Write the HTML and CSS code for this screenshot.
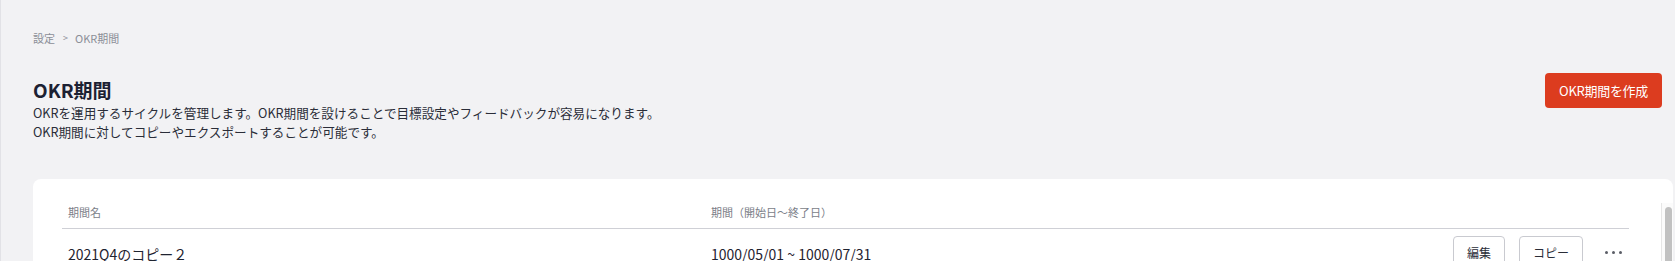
FILE: index.html
```html
<!DOCTYPE html>
<html lang="ja">
<head>
<meta charset="utf-8">
<title>OKR期間</title>
<link rel="stylesheet" href="styles.css">
</head>
<body>
<div class="page">
  <nav class="breadcrumb"><span>設定</span><span class="sep">&gt;</span><span>OKR期間</span></nav>
  <header class="head">
    <div class="head-text">
      <h1 class="title">OKR期間</h1>
      <p class="desc">OKRを運用するサイクルを管理します。OKR期間を設けることで目標設定やフィードバックが容易になります。<br>OKR期間に対してコピーやエクスポートすることが可能です。</p>
    </div>
    <button class="primary">OKR期間を作成</button>
  </header>
  <section class="card">
    <div class="table">
      <div class="row header">
        <div class="cell">期間名</div>
        <div class="cell">期間（開始日〜終了日）</div>
        <div class="cell"></div>
      </div>
      <div class="row">
        <div class="cell name">2021Q4のコピー２</div>
        <div class="cell date">1000/05/01 ~ 1000/07/31</div>
        <div class="cell actions">
          <button class="outline">編集</button>
          <button class="outline">コピー</button>
          <button class="more" aria-label="more"><span></span><span></span><span></span></button>
        </div>
      </div>
      <div class="row">
        <div class="cell name">2021Q4のコピー</div>
        <div class="cell date">1000/05/01 ~ 1000/07/31</div>
        <div class="cell actions">
          <button class="outline">編集</button>
          <button class="outline">コピー</button>
          <button class="more" aria-label="more"><span></span><span></span><span></span></button>
        </div>
      </div>
    </div>
    <div class="scrollbar"><div class="thumb"></div></div>
  </section>
</div>
</body>
</html>
```

FILE: styles.css
```css
html, body {
  margin: 0;
  padding: 0;
  height: 100%;
  overflow: hidden;
}
body {
  background: #f2f2f4;
  font-family: "Noto Sans CJK JP", "Noto Sans", sans-serif;
  color: #2a2d38;
  border-left: 1px solid #e2e2e6;
  box-sizing: border-box;
}
.page {
  padding: 30px 2px 0 32px;
}
.breadcrumb {
  font-size: 11px;
  line-height: 16px;
  color: #8b8e97;
  display: flex;
}
.breadcrumb .sep {
  margin: 0 7px 0 8px;
  font-size: 9px;
}
.head {
  display: flex;
  justify-content: space-between;
  align-items: flex-start;
  margin-top: 31px;
  padding-right: 11px;
}
.title {
  margin: 0;
  font-size: 19px;
  line-height: 26px;
  font-weight: 700;
  color: #1c2133;
}
.desc {
  margin: 0;
  font-size: 12.6px;
  line-height: 19px;
  color: #2a2d38;
}
.primary {
  margin-top: -4px;
  height: 35px;
  padding: 0 14px;
  border: none;
  border-radius: 4px;
  background: #dc3c1f;
  color: #ffffff;
  font-family: inherit;
  font-size: 13px;
  letter-spacing: -0.3px;
}
.card {
  margin-top: 38px;
  background: #ffffff;
  border-radius: 8px;
  padding-top: 24px;
  height: 300px;
  box-sizing: border-box;
  display: flex;
  align-items: stretch;
}
.table {
  flex: 1;
  margin: 0 32px 0 29px;
}
.scrollbar {
  width: 12px;
  background: #fbfbfb;
  border-left: 1px solid #e6e6e6;
  padding: 4px 1px 0 3px;
  box-sizing: border-box;
}
.thumb {
  height: 120px;
  background: #c1c1c1;
  border-radius: 4px;
}
.row {
  display: grid;
  grid-template-columns: 643px 1fr auto;
  align-items: center;
  border-bottom: 1px solid #e6e6ea;
}
.row.header {
  border-bottom: 1px solid #cfd0d6;
  align-items: start;
}
.cell {
  padding: 0 6px;
}
.header .cell {
  font-size: 11px;
  line-height: 16px;
  color: #7b7e88;
  padding-top: 1px;
  padding-bottom: 8px;
}
.name, .date {
  font-size: 14px;
  line-height: 22px;
  color: #1f2330;
  padding-top: 2px;
}
.actions {
  display: flex;
  gap: 14px;
  padding: 7px 0 8px;
  align-items: center;
}
.outline {
  height: 33px;
  padding: 0 13px;
  background: #ffffff;
  border: 1px solid #c9cad0;
  border-radius: 4px;
  font-family: inherit;
  font-size: 12px;
  color: #2a2d38;
}
.more {
  width: 32px;
  height: 33px;
  border: none;
  background: transparent;
  display: flex;
  align-items: center;
  justify-content: center;
  gap: 4px;
  padding: 0;
}
.more span {
  width: 3px;
  height: 3px;
  border-radius: 50%;
  background: #5a5d66;
}
```
